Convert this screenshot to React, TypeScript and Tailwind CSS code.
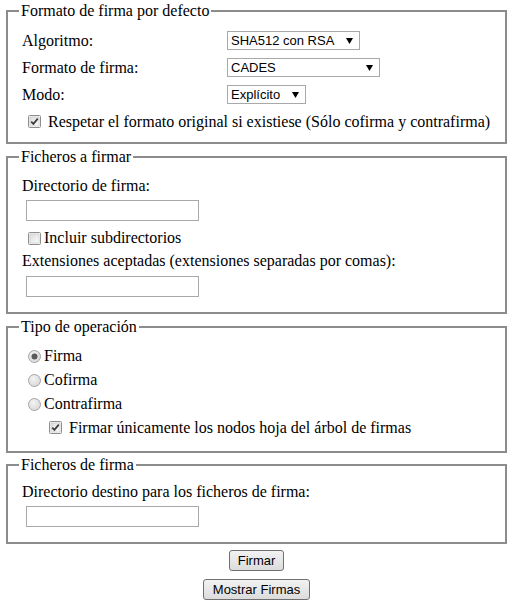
import React from "react";

const serif = "font-[Liberation_Serif,Times_New_Roman,serif]";
const sans = "font-[Liberation_Sans,Arial,sans-serif]";

function Check({ checked }: { checked?: boolean }) {
  return (
    <svg width="13" height="13" viewBox="0 0 13 13" className="shrink-0">
      <defs>
        <linearGradient id="cbg" x1="0" y1="0" x2="1" y2="1">
          <stop offset="0" stopColor="#dcdcdc" />
          <stop offset="1" stopColor="#fbfbfb" />
        </linearGradient>
      </defs>
      <rect x="0.5" y="0.5" width="12" height="12" rx="1" fill="#f4f4f4" stroke="#8f8f8f" />
      <rect x="2" y="2" width="9" height="9" fill="url(#cbg)" stroke="#c8c8c8" strokeWidth="0.6" />
      {checked && (
        <path d="M3.2 6.6 L5.4 8.9 L9.8 3.6" fill="none" stroke="#3c3c3c" strokeWidth="1.7" />
      )}
    </svg>
  );
}

function Radio({ checked }: { checked?: boolean }) {
  return (
    <svg width="13" height="13" viewBox="0 0 13 13" className="shrink-0">
      <defs>
        <radialGradient id="rbg" cx="0.4" cy="0.35" r="0.7">
          <stop offset="0" stopColor="#f4f4f4" />
          <stop offset="1" stopColor="#d6d6d6" />
        </radialGradient>
      </defs>
      <circle cx="6.5" cy="6.5" r="6" fill="url(#rbg)" stroke="#a5a5a5" />
      {checked && <circle cx="6.5" cy="6.5" r="3" fill="#5a5a5a" />}
    </svg>
  );
}

function Select({ value, width }: { value: string; width: string }) {
  return (
    <div
      className={`${width} h-[19px] flex items-center justify-between border border-[#a9a9a9] bg-white pl-[3px] pr-[6px] text-[13px] text-black ${sans}`}
    >
      <span>{value}</span>
      <svg width="7" height="6" viewBox="0 0 7 6">
        <path d="M0 0 H7 L3.5 6 Z" fill="#000" />
      </svg>
    </div>
  );
}

function TextBox() {
  return <div className="ml-[4px] w-[173px] h-[21px] border border-[#a9a9a9] bg-white" />;
}

function Box({ title, className, children }: { title: string; className?: string; children: React.ReactNode }) {
  return (
    <fieldset className={`mx-[6px] border-2 border-[#8c8c8c] pl-[11px] pr-3 ${className ?? ""}`}>
      <legend className="px-[2px] leading-[18px]">{title}</legend>
      <div className="pl-[3px]">{children}</div>
    </fieldset>
  );
}

function Button({ label, width }: { label: string; width: string }) {
  return (
    <div
      className={`${width} h-[21px] flex items-center justify-center rounded-[3px] border border-[#707070] bg-gradient-to-b from-[#f2f2f2] to-[#dcdcdc] text-[13px] text-black ${sans}`}
    >
      {label}
    </div>
  );
}

export default function App() {
  return (
    <div className={`w-[513px] h-[606px] bg-white pt-[2px] text-[16px] text-black ${serif}`}>
      <Box title="Formato de firma por defecto" className="pt-[7px] pb-[7px]">
        <div className="grid grid-cols-[205px_auto] items-center">
          <div className="h-[27px] flex items-center">Algoritmo:</div>
          <Select value="SHA512 con RSA" width="w-[133px]" />
          <div className="h-[27px] flex items-center">Formato de firma:</div>
          <Select value="CADES" width="w-[153px]" />
          <div className="h-[27px] flex items-center">Modo:</div>
          <Select value="Explícito" width="w-[79px]" />
        </div>
        <div className="h-[27px] flex items-center gap-[7px] pl-[6px]">
          <Check checked />
          <span>Respetar el formato original si existiese (Sólo cofirma y contrafirma)</span>
        </div>
      </Box>

      <Box title="Ficheros a firmar" className="mt-[4px] pt-[6px] pb-[15px]">
        <div className="h-[27px] flex items-center">Directorio de firma:</div>
        <div className="mt-[1px]">
          <TextBox />
        </div>
        <div className="mt-[4px] h-[26px] flex items-center gap-[3px] pl-[6px]">
          <Check />
          <span>Incluir subdirectorios</span>
        </div>
        <div className="h-[20px] flex items-center">Extensiones aceptadas (extensiones separadas por comas):</div>
        <div className="mt-[5px]">
          <TextBox />
        </div>
      </Box>

      <Box title="Tipo de operación" className="mt-[4px] pt-[8px] pb-[12px]">
        <div className="h-[24px] flex items-center gap-[3px] pl-[6px]">
          <Radio checked />
          <span>Firma</span>
        </div>
        <div className="h-[24px] flex items-center gap-[3px] pl-[6px]">
          <Radio />
          <span>Cofirma</span>
        </div>
        <div className="h-[24px] flex items-center gap-[3px] pl-[6px]">
          <Radio />
          <span>Contrafirma</span>
        </div>
        <div className="h-[23px] flex items-center gap-[7px] pl-[27px]">
          <Check checked />
          <span>Firmar únicamente los nodos hoja del árbol de firmas</span>
        </div>
      </Box>

      <Box title="Ficheros de firma" className="mt-[3px] pt-[4px] pb-[15px]">
        <div className="h-[27px] flex items-center">Directorio destino para los ficheros de firma:</div>
        <div className="mt-[1px]">
          <TextBox />
        </div>
      </Box>

      <div className="mt-[6px] flex flex-col items-center gap-[8px]">
        <Button label="Firmar" width="w-[55px]" />
        <Button label="Mostrar Firmas" width="w-[107px]" />
      </div>
    </div>
  );
}
